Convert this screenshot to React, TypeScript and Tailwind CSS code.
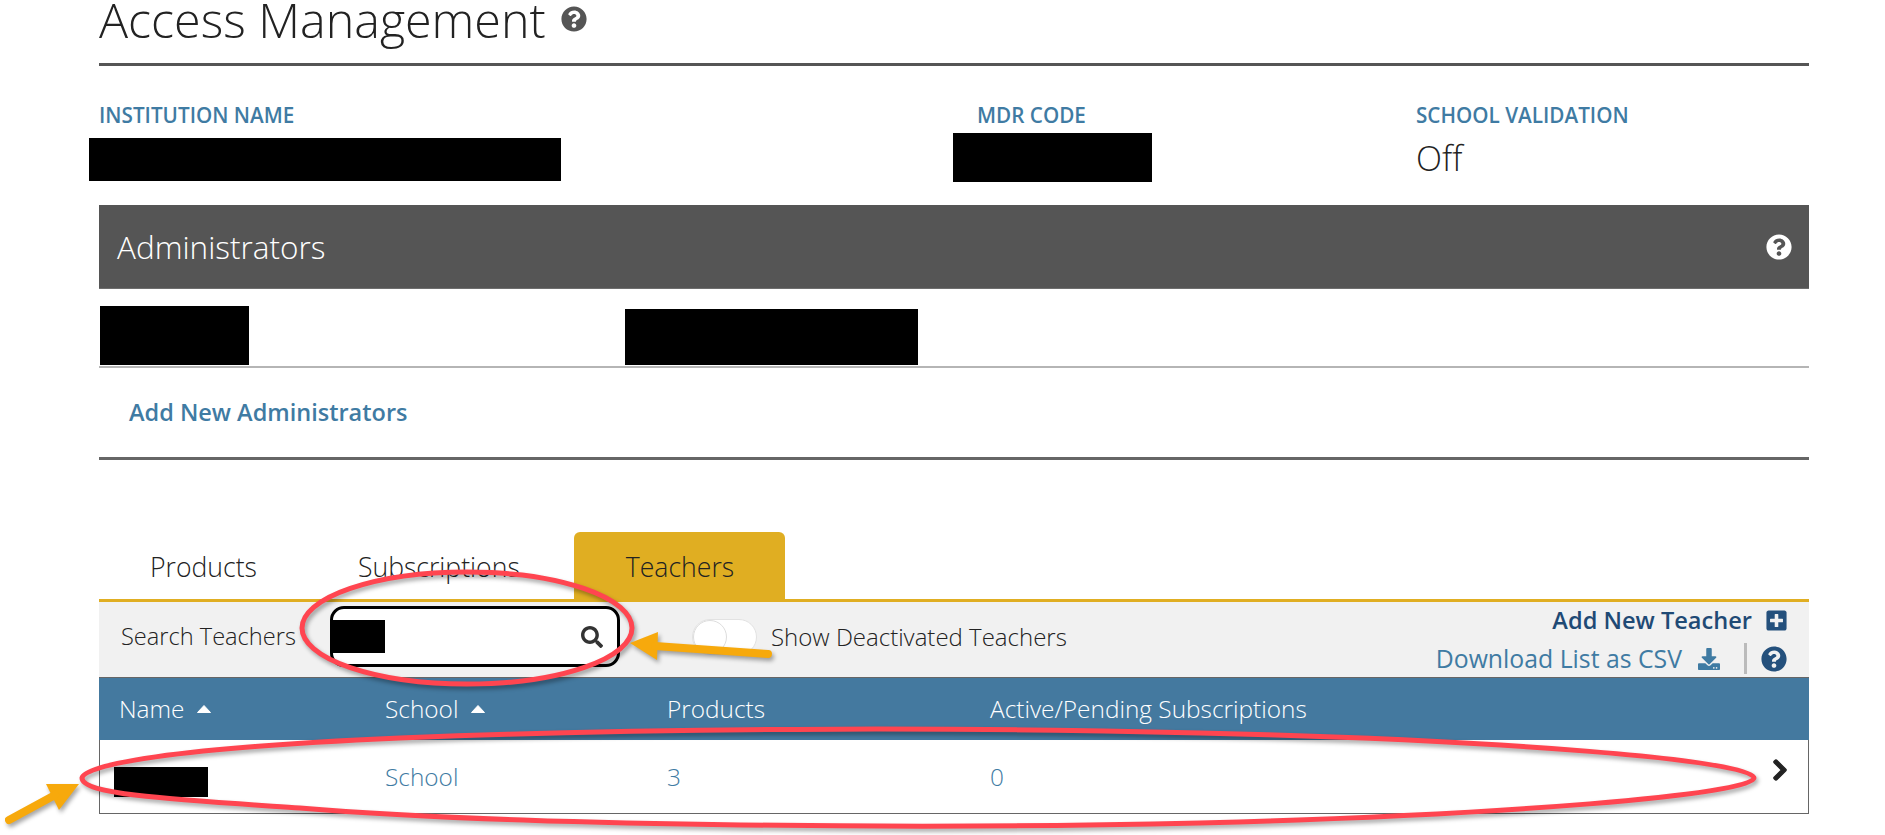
import { FaQuestionCircle, FaPlusSquare, FaDownload, FaSearch, FaChevronRight } from "react-icons/fa";

function Caret() {
  return (
    <svg width="14" height="8" viewBox="0 0 14 8" className="ml-[13px]">
      <path d="M7 0.5 L13.5 7.5 L0.5 7.5 Z" fill="#fff" stroke="#fff" strokeLinejoin="round" />
    </svg>
  );
}

export default function App() {
  return (
    <div className="relative w-[1885px] h-[835px] overflow-hidden bg-white font-['Open_Sans',sans-serif] text-[#222]">
      <div className="ml-[99px] w-[1710px]">
        <div className="h-[66px] border-b-[3px] border-[#555] flex items-start">
          <h1 className="text-[48.4px] leading-[39px] font-light text-[#222]">Access Management</h1>
          <FaQuestionCircle className="ml-[15px] mt-[6px] text-[26px] text-[#555]" />
        </div>

        <div className="h-[139px] flex pt-[37px]">
          <div className="w-[878px]">
            <div className="text-[20.7px] leading-[25px] font-semibold text-[#3f7ba3]">INSTITUTION NAME</div>
            <div className="mt-[10px] -ml-[10px] w-[472px] h-[43px] bg-black" />
          </div>
          <div className="w-[439px]">
            <div className="text-[20.7px] leading-[25px] font-semibold text-[#3f7ba3]">MDR CODE</div>
            <div className="mt-[5px] -ml-[24px] w-[199px] h-[49px] bg-black" />
          </div>
          <div>
            <div className="text-[20.7px] leading-[25px] font-semibold text-[#3f7ba3]">SCHOOL VALIDATION</div>
            <div className="mt-[7px] text-[34px] leading-[46px] font-light text-[#222]">Off</div>
          </div>
        </div>

        <div className="h-[84px] bg-[#555] border-b border-[#6e6e6e] flex items-center justify-between pl-[18px] pr-[17px]">
          <span className="text-[31.5px] font-light text-white">Administrators</span>
          <FaQuestionCircle className="text-[26px] text-white" />
        </div>

        <div className="h-[79px] border-b-2 border-[#b5b5b5] flex items-start pt-[17px]">
          <div className="ml-[1px] w-[149px] h-[59px] bg-black" />
          <div className="ml-[376px] mt-[3px] w-[293px] h-[56px] bg-black" />
        </div>

        <div className="h-[92px] border-b-[3px] border-[#666] flex items-center pl-[30px]">
          <span className="text-[23.5px] font-semibold text-[#3f7ba3]">Add New Administrators</span>
        </div>

        <div className="mt-[72px] h-[70px] border-b-[3px] border-[#e0ae22] flex items-stretch text-[26.6px] font-light text-[#222]">
          <div className="pl-[51px] pr-[50px] pt-[5px] flex items-center">Products</div>
          <div className="pl-[51px] pr-[54px] pt-[5px] flex items-center">Subscriptions</div>
          <div className="pl-[52px] pr-[51px] pt-[5px] flex items-center bg-[#e0ae22] rounded-t-[6px]">Teachers</div>
        </div>

        <div className="h-[75px] bg-[#f1f1f1] flex items-center pl-[22px] relative">
          <span className="w-[209px] mb-[5px] text-[23.6px] font-light text-[#222]">Search Teachers</span>
          <div className="w-[290px] h-[61px] mb-[6px] border-[3px] border-black rounded-[14px] bg-white flex items-center justify-between pr-[14px]">
            <div className="-ml-[3px] w-[55px] h-[33px] bg-black" />
            <FaSearch className="text-[22px] text-[#333]" />
          </div>
          <div className="ml-[72px] mb-[6px] w-[65px] h-[36px] rounded-full bg-white border border-[#e2e2e2] relative">
            <div className="w-[34px] h-[34px] rounded-full bg-white border border-[#ddd]" />
          </div>
          <span className="ml-[14px] mb-[6px] text-[24px] font-light text-[#222]">Show Deactivated Teachers</span>
          <div className="ml-auto pr-[22px] flex flex-col items-end">
            <div className="flex items-center h-[38px] -mr-[1px]">
              <span className="text-[23.6px] font-semibold text-[#1f4a75]">Add New Teacher</span>
              <FaPlusSquare className="ml-[13px] text-[23px] text-[#24507c]" />
            </div>
            <div className="flex items-center h-[38px]">
              <span className="text-[24.8px] text-[#3f7ba3]">Download List as CSV</span>
              <FaDownload className="ml-[16px] text-[22px] text-[#3f7ba3]" />
              <div className="ml-[24px] w-[3px] h-[31px] bg-[#bbb]" />
              <FaQuestionCircle className="ml-[14px] text-[26px] text-[#24507c]" />
            </div>
          </div>
        </div>

        <div className="h-[63px] bg-[#44799f] border-t border-[#666] grid grid-cols-[286px_282px_323px_1fr] items-center text-[24.4px] text-white font-light">
          <div className="pl-[20px] flex items-center">Name<Caret /></div>
          <div className="flex items-center">School<Caret /></div>
          <div>Products</div>
          <div>Active/Pending Subscriptions</div>
        </div>

        <div className="h-[74px] pt-[2px] border border-t-0 border-[#666] border-t-[#888] grid grid-cols-[285px_282px_323px_1fr] items-center text-[24.4px] font-light text-[#3f7ba3] relative">
          <div className="ml-[14px] w-[94px] h-[30px] bg-black mt-[8px]" />
          <div>School</div>
          <div>3</div>
          <div className="flex items-center justify-between pr-[16px]">
            <span>0</span>
            <FaChevronRight stroke="currentColor" strokeWidth={24} className="text-[24px] text-[#222] -mt-[15px]" />
          </div>
        </div>
      </div>

      <svg
        width="1885"
        height="835"
        viewBox="0 0 1885 835"
        fill="none"
        className="absolute left-0 top-0 pointer-events-none drop-shadow-[2px_3px_2px_rgba(0,0,0,0.35)]"
      >
        <ellipse cx="467" cy="628" rx="165" ry="56" stroke="#ff4550" strokeWidth="5" />
        <path
          d="M82 778 C84 765 170 748 400 738 C700 726 1000 728 1200 733 C1500 740 1754 760 1754 778 C1754 795 1500 815 1200 823 C900 830 500 825 300 808 C180 800 82 795 82 778 Z"
          stroke="#ff4550"
          strokeWidth="5"
        />
        <path d="M630 643 L658 632 L657 660 Z" fill="#f7a90c" />
        <path d="M655 646 L768 654" stroke="#f7a90c" strokeWidth="8" strokeLinecap="round" />
        <path d="M79 784 L46 784 L59 810 Z" fill="#f7a90c" />
        <path d="M55 795 L9 820" stroke="#f7a90c" strokeWidth="8" strokeLinecap="round" />
      </svg>
    </div>
  );
}
